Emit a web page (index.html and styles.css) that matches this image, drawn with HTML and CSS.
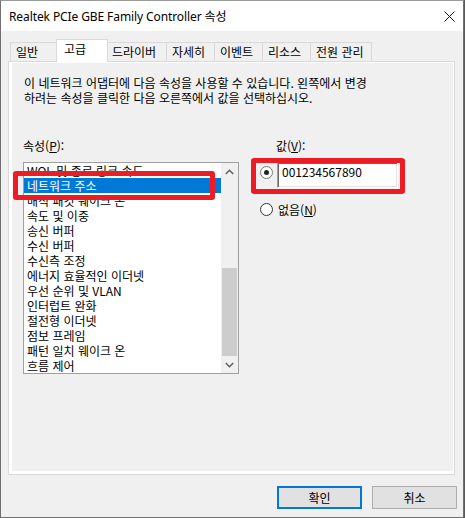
FILE: index.html
```html
<!DOCTYPE html>
<html lang="ko">
<head>
<meta charset="utf-8">
<title>Realtek PCIe GBE Family Controller 속성</title>
<link rel="stylesheet" href="styles.css">
</head>
<body>
<div class="window">
  <div class="titlebar">
    <span class="title">Realtek PCIe GBE Family Controller 속성</span>
    <svg class="close" width="11" height="11" viewBox="0 0 11 11"><path d="M0.5 0.5 L10.5 10.5 M10.5 0.5 L0.5 10.5" stroke="#111" stroke-width="1" fill="none"/></svg>
  </div>
  <div class="tabs">
    <div class="tab tab-general">일반</div>
    <div class="tab tab-advanced selected">고급</div>
    <div class="tab tab-driver">드라이버</div>
    <div class="tab tab-details">자세히</div>
    <div class="tab tab-events">이벤트</div>
    <div class="tab tab-resources">리소스</div>
    <div class="tab tab-power">전원 관리</div>
  </div>
  <div class="pane">
    <div class="page">
      <p class="desc">이 네트워크 어댑터에 다음 속성을 사용할 수 있습니다. 왼쪽에서 변경<br>하려는 속성을 클릭한 다음 오른쪽에서 값을 선택하십시오.</p>
      <div class="cols">
        <div class="col-left">
          <div class="label">속성(<u>P</u>):</div>
          <div class="listbox">
            <ul class="items">
              <li>WOL 및 종료 링크 속도</li>
              <li class="sel">네트워크 주소</li>
              <li>매직 패킷 웨이크 온</li>
              <li>속도 및 이중</li>
              <li>송신 버퍼</li>
              <li>수신 버퍼</li>
              <li>수신측 조정</li>
              <li>에너지 효율적인 이더넷</li>
              <li>우선 순위 및 VLAN</li>
              <li>인터럽트 완화</li>
              <li>절전형 이더넷</li>
              <li>점보 프레임</li>
              <li>패턴 일치 웨이크 온</li>
              <li>흐름 제어</li>
            </ul>
            <div class="scrollbar">
              <div class="sb-btn"><svg width="9" height="6" viewBox="0 0 9 6"><path d="M0.8 5 L4.5 1.3 L8.2 5" stroke="#606060" stroke-width="1.5" fill="none"/></svg></div>
              <div class="sb-track"><div class="sb-thumb"></div></div>
              <div class="sb-btn"><svg width="9" height="6" viewBox="0 0 9 6"><path d="M0.8 1 L4.5 4.7 L8.2 1" stroke="#606060" stroke-width="1.5" fill="none"/></svg></div>
            </div>
          </div>
        </div>
        <div class="col-right">
          <div class="label label-value">값(<u>V</u>):</div>
          <div class="radio-row first">
            <span class="radio checked"></span>
            <div class="edit">001234567890</div>
          </div>
          <div class="radio-row second">
            <span class="radio"></span>
            <span class="radio-text">없음(<u>N</u>)</span>
          </div>
        </div>
      </div>
    </div>
  </div>
  <div class="buttons">
    <button class="btn default">확인</button>
    <button class="btn">취소</button>
  </div>
  <div class="annot annot-list"></div>
  <div class="annot annot-value"></div>
</div>
</body>
</html>
```
FILE: styles.css
```css
* { box-sizing: border-box; }
html, body { margin: 0; padding: 0; }
body {
  background: #5a5a5a;
  font-family: "Noto Sans CJK KR", sans-serif;
  font-size: 12px;
  color: #000;
  width: 465px;
  height: 518px;
  overflow: hidden;
}
.window {
  position: relative;
  width: 464px;
  height: 518px;
  background: #f0f0f0;
  border: 1px solid #707070;
  border-top-color: #9a9a9a;
}
.titlebar {
  height: 30px;
  background: #fff;
  display: flex;
  align-items: center;
  justify-content: space-between;
  padding-left: 8px;
}
.title {
  font-family: "Segoe UI", "Noto Sans", "Noto Sans CJK KR", sans-serif;
  font-size: 12px;
  line-height: 15px;
  letter-spacing: -0.1px;
  color: #000;
}
.close { margin-right: 8px; margin-top: 1px; }

.tabs {
  display: flex;
  align-items: flex-end;
  height: 22px;
  margin: 8px 0 0 9px;
  position: relative;
  z-index: 1;
}
.tab {
  height: 19px;
  border: 1px solid #d9d9d9;
  border-bottom: none;
  background: #f0f0f0;
  padding-left: 5px;
  line-height: 17px;
  white-space: nowrap;
  margin-left: -1px;
}
.tab:first-child { margin-left: 0; }
.tab.selected {
  height: 23px;
  margin-bottom: -1px;
  background: #fff;
  padding-left: 7px;
  line-height: 17px;
  position: relative;
  z-index: 2;
}
.tab-general { width: 47px; }
.tab-advanced { width: 52px; }
.tab-driver { width: 60px; padding-left: 4px; }
.tab-details { width: 49px; }
.tab-events { width: 49px; }
.tab-resources { width: 49px; }
.tab-power { width: 62px; }

.pane {
  margin-left: 7px;
  width: 447px;
  height: 414px;
  border: 1px solid #d9d9d9;
  background: #fff;
  padding: 1px 1px 3px 3px;
}
.page {
  height: 100%;
  background: #f0f0f0;
  padding: 12px 12px 0 12px;
}
.desc {
  margin: 0;
  line-height: 15px;
}
.cols {
  display: flex;
  margin-top: 33px;
}
.label { line-height: 15px; height: 15px; }
.label-value { padding-left: 16px; }
.col-left { width: 216px; margin-left: -1px; }
.col-right { margin-left: 21px; }

.listbox {
  margin-top: 9px;
  width: 216px;
  height: 212px;
  border: 1px solid #a0a0a0;
  background: #fff;
  display: flex;
}
.items {
  list-style: none;
  margin: 0;
  padding: 0;
  flex: 1;
}
.items li {
  height: 15px;
  line-height: 15px;
  padding-left: 3px;
  white-space: nowrap;
}
.items li.sel { background: #0078d7; color: #fff; }
.scrollbar {
  width: 17px;
  background: #f0f0f0;
  display: flex;
  flex-direction: column;
}
.sb-btn {
  height: 17px;
  display: flex;
  align-items: center;
  justify-content: center;
}
.sb-track {
  flex: 1;
  display: flex;
  flex-direction: column;
  justify-content: flex-end;
  padding: 0 1px;
}
.sb-thumb { height: 88px; background: #cdcdcd; }

.radio-row { display: flex; }
.radio-row.first { margin-top: 9px; align-items: flex-start; }
.radio-row.second { margin-top: 14px; align-items: center; line-height: 15px; }
.radio {
  width: 13px;
  height: 13px;
  border-radius: 50%;
  border: 1px solid #333;
  background: #fff;
  display: flex;
  align-items: center;
  justify-content: center;
  flex: none;
}
.radio-row.first .radio { margin-top: 4px; border-color: #7a7a7a; }
.radio.checked::after {
  content: "";
  width: 5px;
  height: 5px;
  border-radius: 50%;
  background: #222;
}
.edit {
  margin-left: 4px;
  width: 121px;
  height: 26px;
  background: #fff;
  border: 1px solid;
  border-color: #a0a0a0 #fff #fff #a0a0a0;
  box-shadow: inset 1px 1px 0 #696969, inset -1px -1px 0 #e3e3e3;
  padding: 1px 0 0 4px;
  line-height: 15px;
}
.radio-text { margin-left: 5px; }

.buttons {
  display: flex;
  justify-content: flex-end;
  gap: 10px;
  margin-top: 11px;
  padding-right: 6px;
}
.btn {
  width: 85px;
  height: 23px;
  background: #e1e1e1;
  border: 1px solid #adadad;
  font-family: "Noto Sans CJK KR", sans-serif;
  font-size: 12px;
  color: #000;
  padding: 0;
  line-height: 15px;
}
.btn.default { border: 2px solid #0078d7; }

.annot {
  position: absolute;
  border: 5px solid #ec1c24;
  border-radius: 3px;
  pointer-events: none;
}
.annot-list { left: 12px; top: 170px; width: 202px; height: 29px; }
.annot-value { left: 250px; top: 157px; width: 154px; height: 36px; }
```
